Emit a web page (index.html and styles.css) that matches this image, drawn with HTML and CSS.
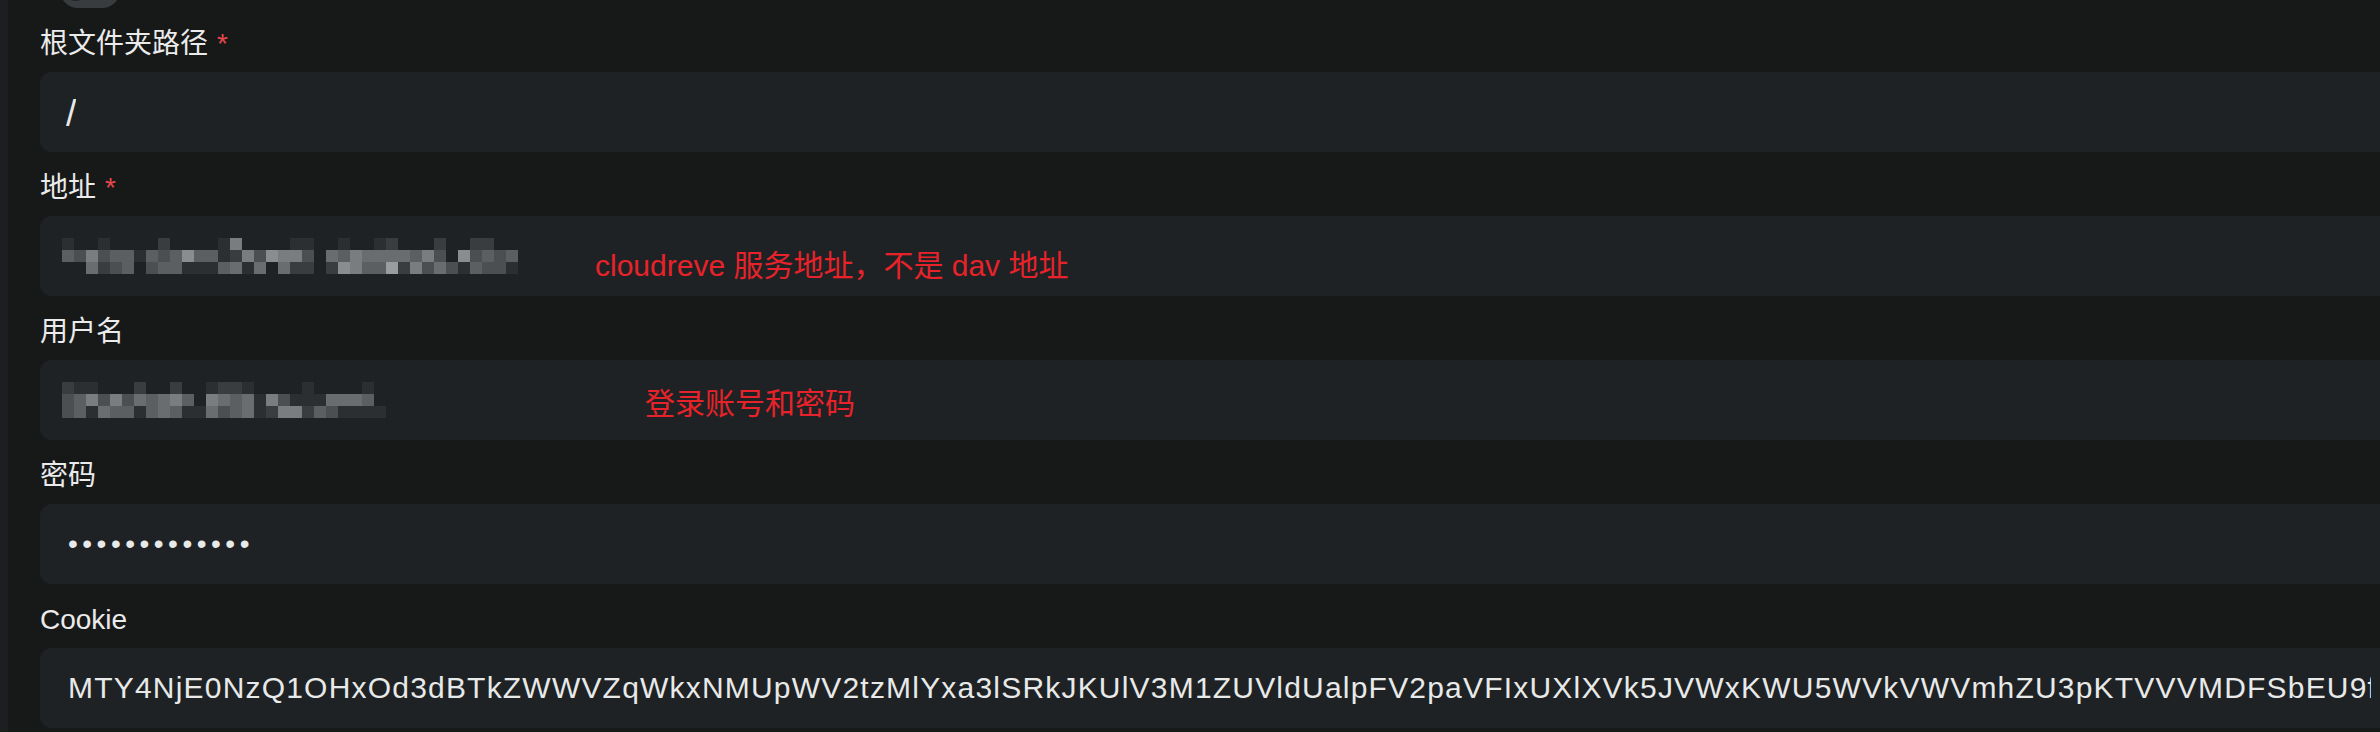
FILE: index.html
```html
<!DOCTYPE html>
<html lang="zh-CN">
<head>
<meta charset="utf-8">
<title>存储配置</title>
<link rel="stylesheet" href="styles.css">
</head>
<body>
<div class="page">
  <aside class="rail"></aside>
  <main class="form">
    <div class="switch"><span class="knob"></span></div>

    <div class="group">
      <label class="label">根文件夹路径<span class="req">*</span></label>
      <div class="input"><span class="value path">/</span></div>
    </div>

    <div class="group">
      <label class="label">地址<span class="req">*</span></label>
      <div class="input">
        <svg class="mosaic" width="456" height="36" viewBox="0 0 456 36">
          <g class="r">
            <rect x="0" y="0" class="c1"/><rect x="36" y="0" class="c1"/><rect x="96" y="0" class="c2"/><rect x="156" y="0" class="c1"/><rect x="168" y="0" class="c6"/><rect x="228" y="0" class="c1"/><rect x="240" y="0" class="c1"/><rect x="276" y="0" class="c1"/><rect x="312" y="0" class="c1"/><rect x="324" y="0" class="c2"/><rect x="372" y="0" class="c2"/><rect x="408" y="0" class="c2"/><rect x="420" y="0" class="c2"/>

            <rect x="0" y="12" class="c4"/><rect x="12" y="12" class="c3"/><rect x="24" y="12" class="c6"/><rect x="36" y="12" class="c3"/><rect x="48" y="12" class="c4"/><rect x="60" y="12" class="c4"/><rect x="72" y="12" class="c1"/><rect x="84" y="12" class="c4"/><rect x="96" y="12" class="c3"/><rect x="108" y="12" class="c4"/><rect x="120" y="12" class="c7"/><rect x="132" y="12" class="c4"/><rect x="144" y="12" class="c4"/><rect x="156" y="12" class="c1"/><rect x="168" y="12" class="c2"/><rect x="180" y="12" class="c6"/><rect x="192" y="12" class="c3"/><rect x="204" y="12" class="c7"/><rect x="216" y="12" class="c6"/><rect x="228" y="12" class="c6"/><rect x="240" y="12" class="c3"/><rect x="264" y="12" class="c5"/><rect x="276" y="12" class="c4"/><rect x="288" y="12" class="c6"/><rect x="300" y="12" class="c5"/><rect x="312" y="12" class="c5"/><rect x="324" y="12" class="c5"/><rect x="336" y="12" class="c5"/><rect x="348" y="12" class="c4"/><rect x="360" y="12" class="c6"/><rect x="372" y="12" class="c3"/><rect x="396" y="12" class="c7"/><rect x="408" y="12" class="c3"/><rect x="420" y="12" class="c4"/><rect x="432" y="12" class="c3"/><rect x="444" y="12" class="c4"/>

            <rect x="24" y="24" class="c5"/><rect x="36" y="24" class="c2"/><rect x="48" y="24" class="c3"/><rect x="60" y="24" class="c4"/><rect x="84" y="24" class="c3"/><rect x="96" y="24" class="c4"/><rect x="108" y="24" class="c4"/><rect x="120" y="24" class="c1"/><rect x="132" y="24" class="c1"/><rect x="144" y="24" class="c1"/><rect x="156" y="24" class="c4"/><rect x="168" y="24" class="c5"/><rect x="180" y="24" class="c1"/><rect x="192" y="24" class="c5"/><rect x="216" y="24" class="c5"/><rect x="228" y="24" class="c2"/><rect x="240" y="24" class="c2"/><rect x="264" y="24" class="c2"/><rect x="276" y="24" class="c7"/><rect x="288" y="24" class="c6"/><rect x="300" y="24" class="c4"/><rect x="312" y="24" class="c4"/><rect x="324" y="24" class="c8"/><rect x="336" y="24" class="c2"/><rect x="348" y="24" class="c6"/><rect x="360" y="24" class="c3"/><rect x="372" y="24" class="c5"/><rect x="384" y="24" class="c3"/><rect x="396" y="24" class="c1"/><rect x="408" y="24" class="c4"/><rect x="420" y="24" class="c3"/><rect x="432" y="24" class="c3"/><rect x="444" y="24" class="c1"/>
          </g>
        </svg>
        <span class="note note-addr">cloudreve 服务地址，不是 dav 地址</span>
      </div>
    </div>

    <div class="group">
      <label class="label">用户名</label>
      <div class="input">
        <svg class="mosaic" width="324" height="36" viewBox="0 0 324 36">
          <g class="r">
            <rect x="0" y="0" class="c2"/><rect x="12" y="0" class="c1"/><rect x="24" y="0" class="c1"/><rect x="72" y="0" class="c2"/><rect x="108" y="0" class="c2"/><rect x="144" y="0" class="c1"/><rect x="156" y="0" class="c2"/><rect x="168" y="0" class="c2"/><rect x="180" y="0" class="c1"/><rect x="240" y="0" class="c1"/><rect x="300" y="0" class="c1"/>

            <rect x="0" y="12" class="c3"/><rect x="12" y="12" class="c4"/><rect x="24" y="12" class="c6"/><rect x="36" y="12" class="c3"/><rect x="48" y="12" class="c6"/><rect x="60" y="12" class="c3"/><rect x="72" y="12" class="c5"/><rect x="84" y="12" class="c4"/><rect x="96" y="12" class="c5"/><rect x="108" y="12" class="c6"/><rect x="120" y="12" class="c4"/><rect x="144" y="12" class="c6"/><rect x="156" y="12" class="c5"/><rect x="168" y="12" class="c4"/><rect x="180" y="12" class="c5"/><rect x="192" y="12" class="c1"/><rect x="204" y="12" class="c6"/><rect x="216" y="12" class="c3"/><rect x="228" y="12" class="c1"/><rect x="240" y="12" class="c1"/><rect x="252" y="12" class="c1"/><rect x="264" y="12" class="c5"/><rect x="276" y="12" class="c5"/><rect x="288" y="12" class="c5"/><rect x="300" y="12" class="c4"/>

            <rect x="0" y="24" class="c3"/><rect x="12" y="24" class="c4"/><rect x="24" y="24" class="c1"/><rect x="36" y="24" class="c5"/><rect x="48" y="24" class="c4"/><rect x="60" y="24" class="c4"/><rect x="72" y="24" class="c1"/><rect x="84" y="24" class="c4"/><rect x="96" y="24" class="c5"/><rect x="108" y="24" class="c4"/><rect x="120" y="24" class="c1"/><rect x="132" y="24" class="c1"/><rect x="144" y="24" class="c5"/><rect x="156" y="24" class="c3"/><rect x="168" y="24" class="c4"/><rect x="180" y="24" class="c5"/><rect x="192" y="24" class="c1"/><rect x="204" y="24" class="c2"/><rect x="216" y="24" class="c6"/><rect x="228" y="24" class="c6"/><rect x="240" y="24" class="c2"/><rect x="252" y="24" class="c4"/><rect x="264" y="24" class="c3"/><rect x="276" y="24" class="c1"/><rect x="288" y="24" class="c1"/><rect x="300" y="24" class="c1"/><rect x="312" y="24" class="c1"/>
          </g>
        </svg>
        <span class="note note-user">登录账号和密码</span>
      </div>
    </div>

    <div class="group">
      <label class="label">密码</label>
      <div class="input"><span class="value dots">•••••••••••••</span></div>
    </div>

    <div class="group">
      <label class="label">Cookie</label>
      <div class="input"><span class="value cookie">MTY4NjE0NzQ1OHxOd3dBTkZWWVZqWkxNMUpWV2tzMlYxa3lSRkJKUlV3M1ZUVldUalpFV2paVFIxUXlXVk5JVWxKWU5WVkVWVmhZU3pKTVVVMDFSbEU9fDk2OWI0ZWQ3</span></div>
    </div>
  </main>
</div>
</body>
</html>
```

FILE: styles.css
```css
html, body {
  margin: 0;
  padding: 0;
  height: 732px;
  overflow: hidden;
  background: #171919;
}

.page {
  display: flex;
  height: 732px;
  font-family: "Liberation Sans", "Noto Sans CJK SC", sans-serif;
}

.rail {
  width: 8px;
  flex: none;
  background: #1c1e1f;
}

.form {
  flex: 1;
  min-width: 0;
  padding-left: 32px;
  display: flex;
  flex-direction: column;
  gap: 16px;
}

.switch {
  position: relative;
  flex: none;
  width: 60px;
  height: 36px;
  margin-top: -28px;
  margin-left: 20px;
  border-radius: 18px;
  background: #393c3f;
}

.knob {
  position: absolute;
  left: 3px;
  top: 4px;
  width: 25px;
  height: 25px;
  border-radius: 50%;
  background: #232527;
}

.group {
  display: flex;
  flex-direction: column;
  gap: 8px;
}

.label {
  display: block;
  height: 40px;
  line-height: 40px;
  font-size: 28px;
  color: #ebebeb;
  white-space: nowrap;
}

.req {
  color: #e5484d;
  margin-left: 9px;
}

.input {
  position: relative;
  height: 80px;
  box-sizing: border-box;
  display: flex;
  align-items: center;
  padding-left: 26px;
  padding-right: 9px;
  border-radius: 12px 0 0 12px;
  background: #1f2224;
  color: #e8e9e9;
  font-size: 30px;
  min-width: 0;
}

.value {
  display: block;
  overflow: hidden;
  white-space: nowrap;
  min-width: 0;
}

.path {
  font-size: 37px;
  line-height: 40px;
  margin-top: 4px;
}

.dots {
  font-size: 28px;
  letter-spacing: 4.5px;
  padding-left: 2px;
}

.cookie {
  padding-left: 2px;
  letter-spacing: 1.2px;
}

.mosaic {
  display: block;
  margin-left: -4px;
}

.r rect {
  width: 12px;
  height: 12px;
}

.c1 { fill: #2c2f31; }
.c2 { fill: #3a3d40; }
.c3 { fill: #4c4f51; }
.c4 { fill: #5c5f61; }
.c5 { fill: #6a6d6f; }
.c6 { fill: #7a7d7f; }
.c7 { fill: #8a8d8f; }
.c8 { fill: #9a9d9f; }

.note {
  position: absolute;
  font-size: 30px;
  line-height: 30px;
  color: #e8222a;
  white-space: nowrap;
}

.note-addr {
  left: 555px;
  top: 35px;
}

.note-user {
  left: 605px;
  top: 29px;
}
```
